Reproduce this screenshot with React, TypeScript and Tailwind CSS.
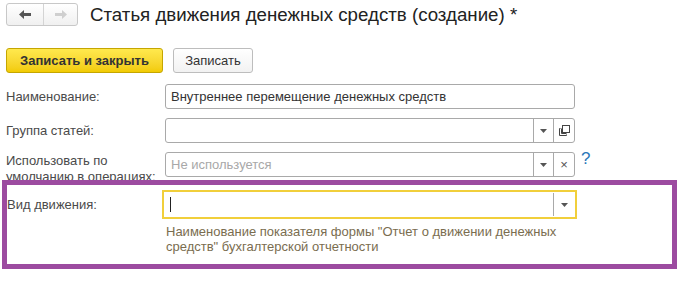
import React from "react";

function Arrow() {
  return (
    <svg width="7" height="4" viewBox="0 0 7 4">
      <path d="M0 0 H7 L3.5 4 Z" fill="#555" />
    </svg>
  );
}

function CopyIcon() {
  return (
    <svg width="11" height="11" viewBox="0 0 11 11" fill="none" stroke="#444" strokeWidth="1">
      <rect x="3.5" y="0.5" width="7" height="7" />
      <path d="M1.5 3.5 H0.5 V10.5 H7.5 V9.5" />
      <path d="M2.5 3.5 V8.5 H7.5" />
    </svg>
  );
}

function Row({ label, children, tall }: { label: React.ReactNode; children: React.ReactNode; tall?: boolean }) {
  return (
    <div className="flex h-[25px] items-start">
      <div className={`w-[165px] shrink-0 pl-[6px] text-[13px] text-[#4a4a4a] ${tall ? "leading-[16px] pt-[1px]" : "leading-[25px]"}`}>
        {label}
      </div>
      {children}
    </div>
  );
}

export default function App() {
  const field = "h-[25px] w-[410px] border border-[#a9a9a9] rounded-[3px] bg-white flex items-stretch text-[13px]";

  return (
    <div className="w-[692px] h-[285px] bg-white overflow-hidden font-['Liberation_Sans',Arial,sans-serif]">
      {/* header */}
      <div className="flex items-center pt-[3px] pl-[6px]">
        <div className="flex h-[23px] w-[72px] border border-[#c8c8c8] rounded-[3px] bg-gradient-to-b from-white to-[#f0f0f0]">
          <div className="w-[37px] flex items-center justify-center border-r border-[#d4d4d4]">
            <svg width="12" height="9" viewBox="0 0 12 9">
              <path d="M0 4.5 L5 0 V3 H12 V6 H5 V9 Z" fill="#555" />
            </svg>
          </div>
          <div className="flex-1 flex items-center justify-center">
            <svg width="12" height="9" viewBox="0 0 12 9">
              <path d="M12 4.5 L7 0 V3 H0 V6 H7 V9 Z" fill="#cfcfcf" />
            </svg>
          </div>
        </div>
        <div className="ml-[12px] text-[18.7px] leading-[23px] text-[#222]">
          Статья движения денежных средств (создание) *
        </div>
      </div>

      {/* buttons */}
      <div className="flex gap-[10px] pl-[6px] mt-[22px]">
        <div className="h-[25px] w-[157px] flex items-center justify-center rounded-[3px] border border-[#c5a600] bg-gradient-to-b from-[#ffe94d] to-[#f2cb00] text-[13px] font-bold text-[#333]">
          Записать и закрыть
        </div>
        <div className="h-[25px] w-[80px] flex items-center justify-center rounded-[3px] border border-[#bdbdbd] bg-gradient-to-b from-white to-[#f2f2f2] text-[13px] text-[#333]">
          Записать
        </div>
      </div>

      {/* form */}
      <div className="mt-[11px] flex flex-col gap-[9px]">
        <Row label="Наименование:">
          <div className={field}>
            <div className="flex-1 px-[5px] leading-[23px] text-[#333]">
              Внутреннее перемещение денежных средств
            </div>
          </div>
        </Row>
        <Row label="Группа статей:">
          <div className={field}>
            <div className="flex-1" />
            <div className="w-[20px] border-l border-[#a9a9a9] flex items-center justify-center">
              <Arrow />
            </div>
            <div className="w-[21px] border-l border-[#a9a9a9] flex items-center justify-center">
              <CopyIcon />
            </div>
          </div>
        </Row>
        <Row
          tall
          label={
            <>
              Использовать по
              <br />
              умолчанию в операциях:
            </>
          }
        >
          <div className={field}>
            <div className="flex-1 px-[5px] leading-[23px] text-[#a8a8a8]">Не используется</div>
            <div className="w-[20px] border-l border-[#a9a9a9] flex items-center justify-center">
              <Arrow />
            </div>
            <div className="w-[21px] border-l border-[#a9a9a9] flex items-center justify-center text-[13px] text-[#555]">
              ×
            </div>
          </div>
          <div className="ml-[6px] -mt-[3px] text-[17px] leading-[20px] text-[#2a77b9]">?</div>
        </Row>
      </div>

      {/* highlighted field */}
      <div className="relative z-10 mt-[3px] ml-[2px] w-[675px] h-[89px] border-[5px] border-[#9c4ba0] bg-white">
        <div className="flex pt-[5px]">
          <div className="w-[155px] shrink-0 text-[13px] leading-[29px] text-[#4a4a4a]">Вид движения:</div>
          <div className="h-[29px] w-[415px] border-2 border-[#f1cf3b] flex items-stretch">
            <div className="flex-1 flex items-center pl-[6px]">
              <div className="w-px h-[15px] bg-[#222]" />
            </div>
            <div className="my-[1px] w-[22px] border-l border-[#a9a9a9] flex items-center justify-center">
              <Arrow />
            </div>
          </div>
        </div>
        <div className="ml-[159px] mt-[5px] text-[13px] leading-[15px] text-[#7a6d4f]">
          Наименование показателя формы "Отчет о движении денежных
          <br />
          средств" бухгалтерской отчетности
        </div>
      </div>
    </div>
  );
}
